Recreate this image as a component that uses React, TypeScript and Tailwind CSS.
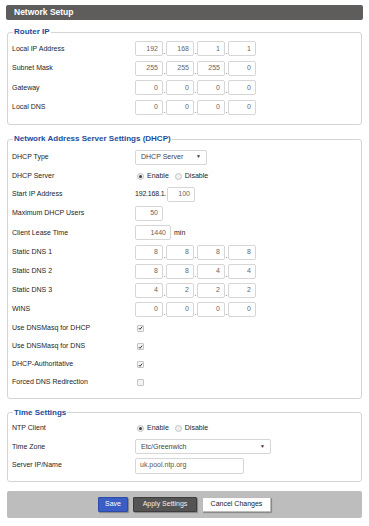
import React from 'react'

const font = { fontFamily: '"Liberation Sans", Arial, sans-serif' }

function IpBox({ value, w = 'w-[28px]' }: { value: string; w?: string }) {
  return (
    <div
      className={`${w} h-[15px] border border-[#d6d6d6] rounded-[2px] bg-white flex items-center justify-end pr-[4px] text-[7px] text-[#666]`}
    >
      {value}
    </div>
  )
}

function IpField({ parts }: { parts: string[] }) {
  return (
    <div className="flex items-end">
      {parts.map((p, i) => (
        <React.Fragment key={i}>
          <IpBox value={p} />
          {i < parts.length - 1 && (
            <span className="w-[3px] text-[7px] leading-[9px] text-[#444] text-center">.</span>
          )}
        </React.Fragment>
      ))}
    </div>
  )
}

function Row({ label, h = 'h-[19.5px]', children }: { label: string; h?: string; children?: React.ReactNode }) {
  return (
    <div className={`flex items-center ${h}`}>
      <div className="w-[123px] text-[7px] text-[#1e1e1e]">{label}</div>
      <div className="flex items-center">{children}</div>
    </div>
  )
}

function Radio({ checked }: { checked?: boolean }) {
  return (
    <span className="w-[7px] h-[7px] rounded-full border border-[#c4c4c4] bg-[#f0f0f0] flex items-center justify-center">
      {checked && <span className="w-[3.5px] h-[3.5px] rounded-full bg-[#444]" />}
    </span>
  )
}

function Radios() {
  return (
    <div className="flex items-center text-[7px] text-[#1e1e1e] pl-[2px]">
      <Radio checked />
      <span className="ml-[3px]">Enable</span>
      <span className="ml-[6px]">
        <Radio />
      </span>
      <span className="ml-[3px]">Disable</span>
    </div>
  )
}

function Check({ checked }: { checked?: boolean }) {
  return (
    <span className="ml-[2px] w-[7px] h-[7px] rounded-[1px] border border-[#c4c4c4] bg-[#f4f4f4] flex items-center justify-center">
      {checked && (
        <svg width="6" height="6" viewBox="0 0 6 6">
          <path d="M1 3.2 L2.4 4.6 L5 1.4" stroke="#333" strokeWidth="1.2" fill="none" />
        </svg>
      )}
    </span>
  )
}

function Select({ value, w }: { value: string; w: string }) {
  return (
    <div
      className={`${w} h-[15px] border border-[#d6d6d6] rounded-[2px] bg-white flex items-center justify-between pl-[5px] pr-[5px] text-[7px] text-[#444]`}
    >
      <span>{value}</span>
      <span className="text-[5px] text-[#333]">▼</span>
    </div>
  )
}

function Box({
  title,
  pb = 'pb-[7px]',
  pt = 'pt-[2px]',
  children,
}: {
  title: string
  pb?: string
  pt?: string
  children: React.ReactNode
}) {
  return (
    <fieldset className={`mx-[1px] border border-[#d4d4d4] rounded-[3px] px-[4px] ${pb} ${pt}`}>
      <legend className="ml-[1px] px-[1px] text-[8px] leading-[10px] font-bold text-[#1d4c9c]">{title}</legend>
      {children}
    </fieldset>
  )
}

export default function App() {
  return (
    <div className="w-[369px] h-[526px] bg-white px-[6px] pt-[5px]" style={font}>
      <div className="h-[15px] bg-[#5e5d5b] rounded-[2px] flex items-center pl-[8px] text-[8.5px] font-bold text-white">
        Network Setup
      </div>

      <div className="mt-[7px]">
        <Box title="Router IP">
          <Row label="Local IP Address">
            <IpField parts={['192', '168', '1', '1']} />
          </Row>
          <Row label="Subnet Mask">
            <IpField parts={['255', '255', '255', '0']} />
          </Row>
          <Row label="Gateway">
            <IpField parts={['0', '0', '0', '0']} />
          </Row>
          <Row label="Local DNS">
            <IpField parts={['0', '0', '0', '0']} />
          </Row>
        </Box>
      </div>

      <div className="mt-[9px]">
        <Box title="Network Address Server Settings (DHCP)" pb="pb-[7px]" pt="pt-[3px]">
          <Row label="DHCP Type" h="h-[20px]">
            <Select value="DHCP Server" w="w-[72px]" />
          </Row>
          <Row label="DHCP Server" h="h-[18.5px]">
            <Radios />
          </Row>
          <Row label="Start IP Address" h="h-[18px]">
            <span className="text-[7px] text-[#1e1e1e] w-[32px] whitespace-nowrap tracking-[-0.2px]">192.168.1.</span>
            <IpBox value="100" />
          </Row>
          <Row label="Maximum DHCP Users">
            <IpBox value="50" />
          </Row>
          <Row label="Client Lease Time">
            <IpBox value="1440" w="w-[36px]" />
            <span className="ml-[3px] text-[7px] text-[#1e1e1e]">min</span>
          </Row>
          <Row label="Static DNS 1">
            <IpField parts={['8', '8', '8', '8']} />
          </Row>
          <Row label="Static DNS 2" h="h-[19px]">
            <IpField parts={['8', '8', '4', '4']} />
          </Row>
          <Row label="Static DNS 3" h="h-[19px]">
            <IpField parts={['4', '2', '2', '2']} />
          </Row>
          <Row label="WINS" h="h-[19px]">
            <IpField parts={['0', '0', '0', '0']} />
          </Row>
          <Row label="Use DNSMasq for DHCP" h="h-[18.5px]">
            <Check checked />
          </Row>
          <Row label="Use DNSMasq for DNS" h="h-[18px]">
            <Check checked />
          </Row>
          <Row label="DHCP-Authoritative" h="h-[18px]">
            <Check checked />
          </Row>
          <Row label="Forced DNS Redirection" h="h-[17px]">
            <Check />
          </Row>
        </Box>
      </div>

      <div className="mt-[9px]">
        <Box title="Time Settings" pb="pb-[6px]">
          <Row label="NTP Client" h="h-[18px]">
            <Radios />
          </Row>
          <Row label="Time Zone" h="h-[18.5px]">
            <Select value="Etc/Greenwich" w="w-[136px]" />
          </Row>
          <Row label="Server IP/Name" h="h-[19px]">
            <div className="w-[109px] h-[16px] border border-[#d6d6d6] rounded-[2px] bg-white flex items-center pl-[4px] text-[7px] text-[#555]">
              uk.pool.ntp.org
            </div>
          </Row>
        </Box>
      </div>

      <div className="mt-[9px] mx-[1px] h-[27px] bg-[#bdbdbd] rounded-[2px] flex items-center justify-center gap-[5px]">
        <button className="h-[15px] w-[30px] bg-[#3a5dc6] border border-[#2d4ca8] rounded-[1px] text-[7px] text-white shadow-[1px_1px_1px_rgba(0,0,0,0.3)]">
          Save
        </button>
        <button className="h-[15px] w-[64px] bg-[#545454] border border-[#3e3e3e] rounded-[1px] text-[7px] text-[#eee] shadow-[1px_1px_1px_rgba(0,0,0,0.3)]">
          Apply Settings
        </button>
        <button className="h-[15px] w-[69px] bg-white border border-[#bbb] rounded-[1px] text-[7px] text-[#222] shadow-[1px_1px_1px_rgba(0,0,0,0.3)]">
          Cancel Changes
        </button>
      </div>
    </div>
  )
}
